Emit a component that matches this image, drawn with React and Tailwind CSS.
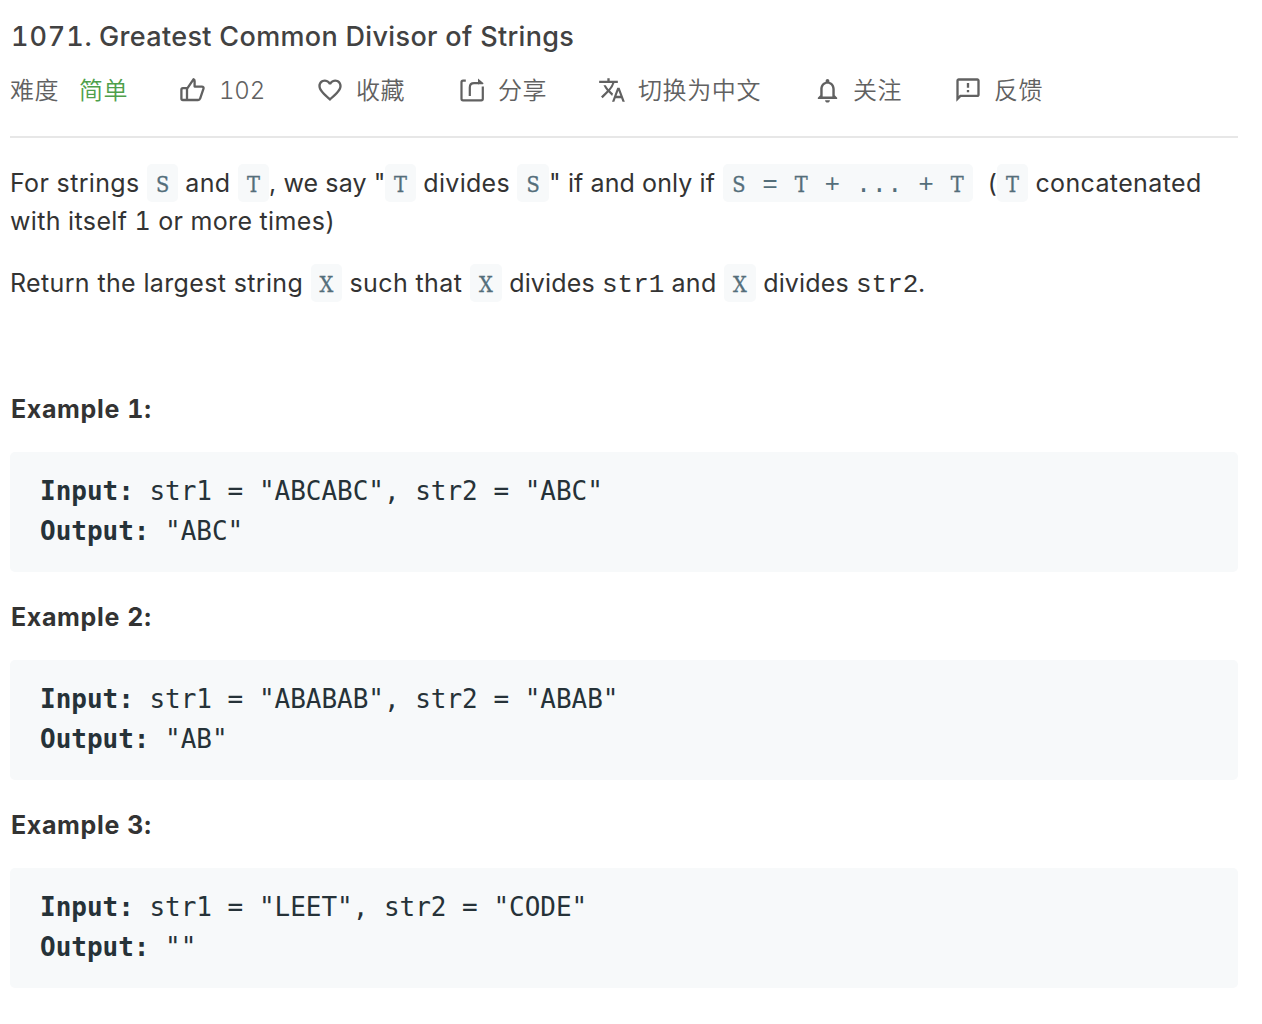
import { MdFavoriteBorder, MdTranslate, MdNotificationsNone, MdOutlineFeedback } from "react-icons/md";

function ThumbIcon() {
  return (
    <svg width="28" height="28" viewBox="0 0 28 28" fill="none" stroke="currentColor" strokeWidth="2.3" strokeLinejoin="round">
      <path d="M9 24V12.8L15.6 3.2c.7.3 1 .9 1 1.7v5.7h7.3c1.3 0 2 .9 1.6 2.1l-3.3 9.6c-.4 1.1-1 1.7-2.1 1.7H9zM9 12.2H4.9c-.9 0-1.5.6-1.5 1.5v8.8c0 .9.6 1.5 1.5 1.5H9" />
    </svg>
  );
}

function ShareIcon() {
  return (
    <svg width="28" height="28" viewBox="0 0 28 28" fill="none" stroke="currentColor" strokeWidth="2.2">
      <path d="M7.8 4.7H5c-.9 0-1.5.6-1.5 1.5v16.6c0 .9.6 1.5 1.5 1.5h18.3c.9 0 1.5-.6 1.5-1.5V10.5" />
      <path d="M11.8 20v-8.5c0-2.6 1.7-4.3 4.3-4.3h5" />
      <path d="M20 2.6L25.6 7.2 24.8 8.3H20z" fill="currentColor" stroke="none" />
    </svg>
  );
}

function Action({ icon, label, className, text }) {
  return (
    <div className={"flex items-center shrink-0 whitespace-nowrap " + className}>
      <span className="w-[40px] shrink-0">{icon}</span>
      <span className={"pt-px " + text}>{label}</span>
    </div>
  );
}

function Run({ w, children }) {
  return <span className={"inline-block whitespace-pre " + w}>{children}</span>;
}

function Glyph({ children }) {
  return (
    <span className="inline-flex w-[15.6px] justify-center font-['DejaVu_Serif_Condensed','DejaVu_Serif',serif] [font-stretch:condensed] text-[21.5px] [-webkit-text-stroke:0.3px_#546e7a]">
      {children}
    </span>
  );
}

function Chip({ w = "w-[31px]", children }) {
  return (
    <span className={"inline-block h-[38px] rounded-[5px] bg-[#f7f9fa] text-center font-['Liberation_Mono',monospace] text-[26px] leading-[41px] tracking-normal text-[#546e7a] whitespace-pre " + w}>
      {children}
    </span>
  );
}

function Code({ children }) {
  return (
    <span className="inline-block w-[62px] pt-[2px] font-['Liberation_Mono',monospace] text-[26px] tracking-normal whitespace-pre">
      {children}
    </span>
  );
}

function Example({ n, input, output }) {
  return (
    <section className="mb-[26px]">
      <h2 className="h-[38px] pl-px text-[25px] leading-[38px] font-bold tabular-nums tracking-[0.65px] mb-[24px]">Example {n}:</h2>
      <pre className="h-[120px] rounded-[5px] bg-[#f7f9fa] px-[30px] py-[19px] font-['DejaVu_Sans_Mono',monospace] text-[26px] leading-[40px] tracking-[-0.02px] text-[#263238]">
        <b>Input:</b>
        {input}
        {"\n"}
        <b>Output:</b>
        {output}
      </pre>
    </section>
  );
}

export default function App() {
  return (
    <main className="w-[1262px] h-[1024px] overflow-hidden bg-white pl-[10px] pr-[24px] font-['Inter','Noto_Sans_CJK_SC',sans-serif] text-[#333333]">
      <h1 className="pt-[18px] pl-[1px] h-[56px] text-[27px] leading-[38px] font-medium tracking-[0.34px] text-[#424242] whitespace-nowrap">
        <span className="inline-block w-[88px] tabular-nums tracking-[0.9px] whitespace-pre">1071. </span>
        Greatest Common Divisor of Strings
      </h1>
      <div className="flex items-center h-[68px] text-[24px] leading-[40px] tracking-[0.4px] [font-weight:350] text-[#616161]">
        <span className="w-[69px] shrink-0 pt-px">难度</span>
        <span className="w-[99px] shrink-0 pt-px text-[#4f9f4b]">简单</span>
        <Action className="w-[138px]" icon={<ThumbIcon />} label="102" text="pl-[1px] tabular-nums tracking-[-0.2px]" />
        <Action className="w-[142px]" icon={<MdFavoriteBorder size={28} />} label="收藏" text="" />
        <Action className="w-[140px]" icon={<ShareIcon />} label="分享" text="" />
        <Action className="w-[215px]" icon={<MdTranslate size={28} />} label="切换为中文" text="tracking-[0.6px]" />
        <Action className="w-[141px]" icon={<MdNotificationsNone size={29} />} label="关注" text="" />
        <Action className="" icon={<MdOutlineFeedback size={28} />} label="反馈" text="" />
      </div>
      <hr className="mt-[12px] h-[2px] border-0 bg-[#e7e7e7]" />
      <p className="mt-[26px] flex flex-wrap h-[76px] text-[25px] leading-[38px] tracking-[0.3px]">
        <Run w="w-[137px] tracking-[0.35px]">For strings </Run>
        <Chip><Glyph>S</Glyph></Chip>
        <Run w="w-[60px]"> and </Run>
        <Chip><Glyph>T</Glyph></Chip>
        <Run w="w-[116px]  tracking-[0.1px]">, we say "</Run>
        <Chip><Glyph>T</Glyph></Chip>
        <Run w="w-[101px]"> divides </Run>
        <Chip w="w-[32px]"><Glyph>S</Glyph></Chip>
        <Run w="w-[174px] tracking-[0.1px]">" if and only if </Run>
        <Chip w="w-[250px]">
          <Glyph>S</Glyph> = <Glyph>T</Glyph> + ... + <Glyph>T</Glyph>
        </Chip>
        <Run w="w-[24px]">  (</Run>
        <Chip><Glyph>T</Glyph></Chip>
        <Run w="w-[190px] tracking-[0.37px]"> concatenated </Run>
        <Run w="w-[400px] tabular-nums tracking-[0.38px]">with itself 1 or more times)</Run>
      </p>
      <p className="mt-[24px] mb-[88px] flex h-[38px] text-[25px] leading-[38px] tracking-[0.3px]">
        <Run w="w-[301px] tracking-[0.36px]">Return the largest string </Run>
        <Chip><Glyph>X</Glyph></Chip>
        <Run w="w-[128px] tracking-[0.4px]"> such that </Run>
        <Chip w="w-[32px]"><Glyph>X</Glyph></Chip>
        <Run w="w-[100px] tracking-[0.15px]"> divides </Run>
        <Code>str1</Code>
        <Run w="w-[60px] tracking-[0.4px]"> and </Run>
        <Chip w="w-[32px]"><Glyph>X</Glyph></Chip>
        <Run w="w-[100px] tracking-[0.15px]"> divides </Run>
        <Code>str2</Code>
        <Run w="">.</Run>
      </p>
      <Example n={1} input={' str1 = "ABCABC", str2 = "ABC"'} output={' "ABC"'} />
      <Example n={2} input={' str1 = "ABABAB", str2 = "ABAB"'} output={' "AB"'} />
      <Example n={3} input={' str1 = "LEET", str2 = "CODE"'} output={' ""'} />
    </main>
  );
}
